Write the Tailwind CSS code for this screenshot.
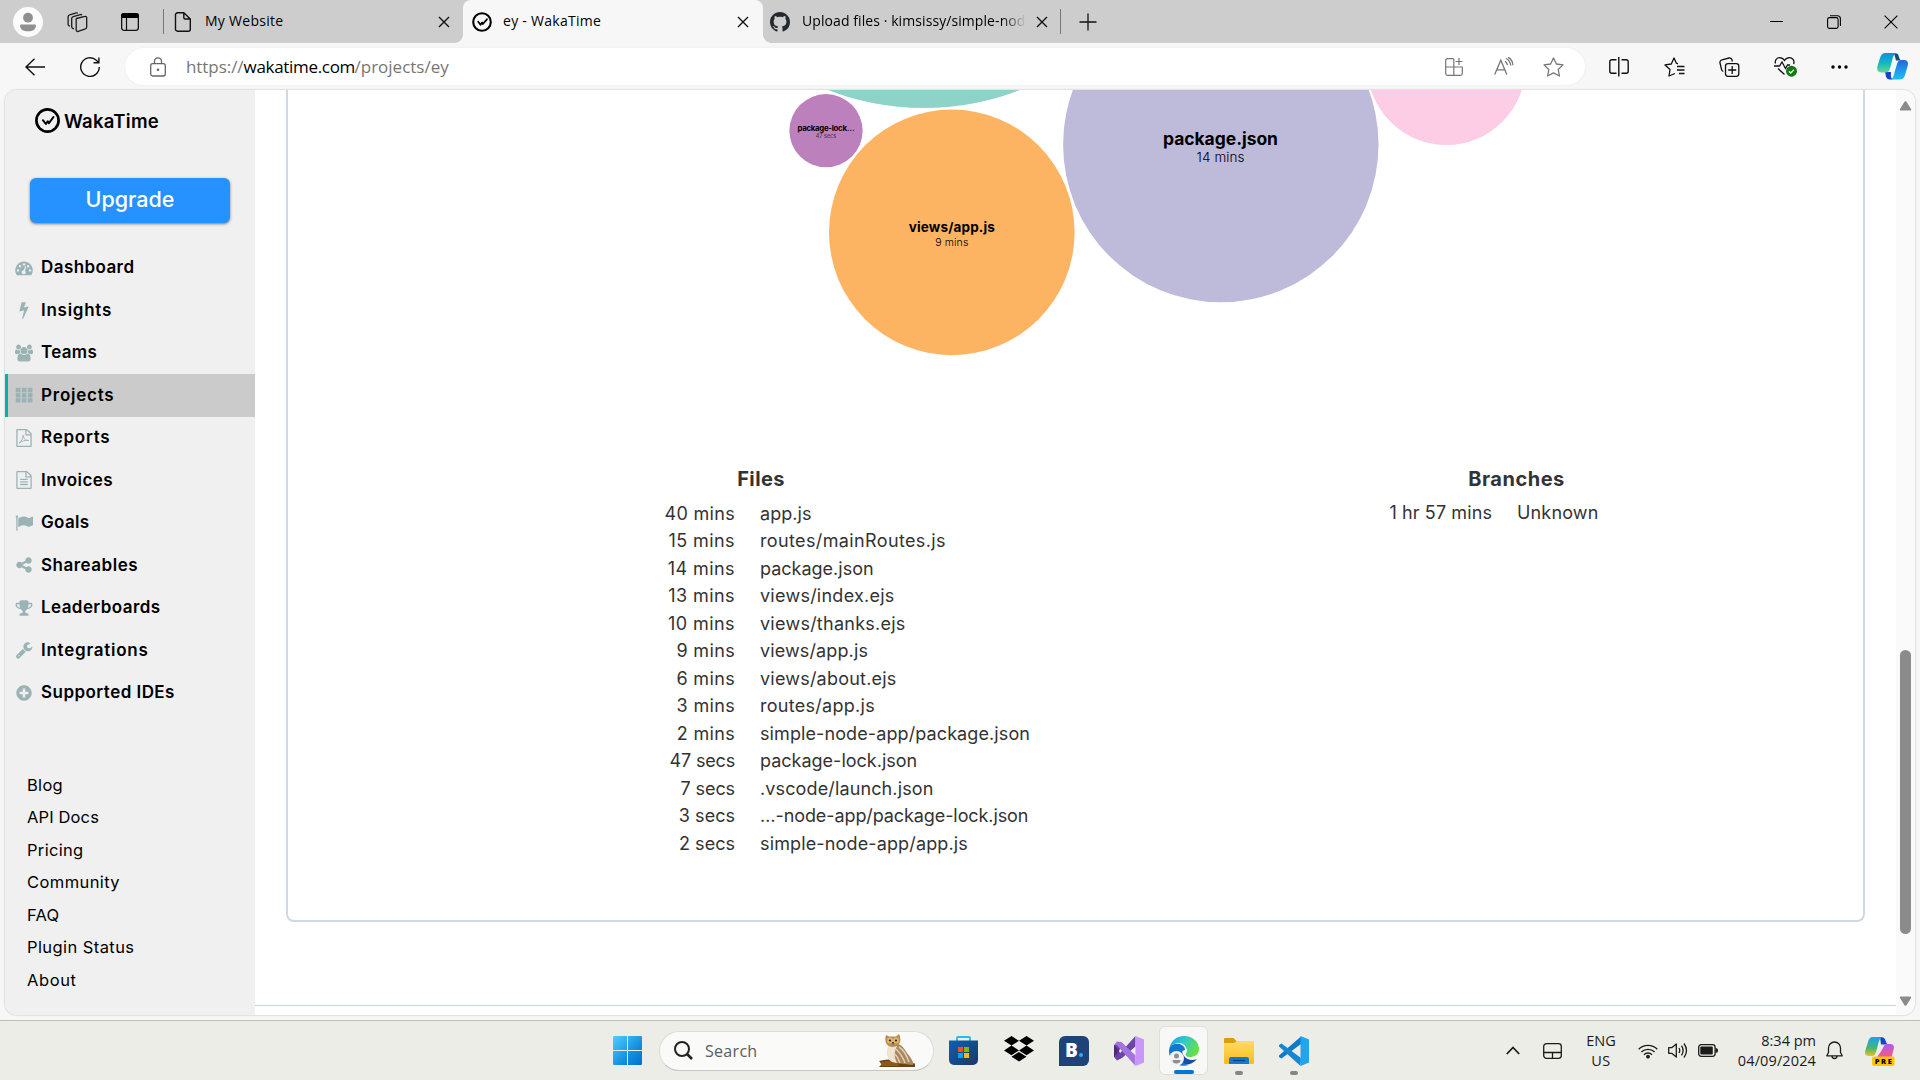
<!DOCTYPE html>
<html lang="en">
<head>
<meta charset="utf-8">
<title>ey - WakaTime</title>
<script src="https://cdn.jsdelivr.net/npm/@tailwindcss/browser@4"></script>
</head>
<body class="w-[1920px] h-[1080px] overflow-hidden bg-[#f7f7f7] font-['Inter','Roboto',sans-serif] text-black flex flex-col">

<!-- Tab strip -->
<header class="h-[43px] shrink-0 flex items-center bg-[#cdcdcd] font-['Open_Sans','Noto_Sans',sans-serif] text-[14px] whitespace-nowrap">
  <div class="w-14 flex justify-center"><svg width="30" height="30" viewBox="0 0 30 30"><circle cx="15" cy="15" r="15" fill="#fbfbfb"/><circle cx="15" cy="10.700" r="4.900" fill="#8f8f8f"/><path d="M8 17.500h14a.9.9 0 0 1 .9.900c0 4-3.200 5.900-7.900 5.900s-7.900-1.900-7.900-5.900a.9.9 0 0 1 .9-.9z" fill="#8f8f8f"/></svg></div>
  <div class="w-11 flex justify-center pr-0.5"><svg width="22" height="22" viewBox="0 0 22 22" fill="none" stroke="#1b1b1b" stroke-width="1.300"><path d="M10.500 7.500 18.800 5.400a1.500 1.500 0 0 1 1.900 1.400v9.200a2 2 0 0 1-1.300 1.900l-7.200 2.500a1.500 1.500 0 0 1-2-1.400V9.200a1.800 1.800 0 0 1 .3-1.700z"/><path d="M8 17.800 6.700 17.300A1.600 1.600 0 0 1 5.700 15.800V7.500a2 2 0 0 1 1.500-1.900l7.200-2a1.300 1.300 0 0 1 1.500.6M4 15.300l-1-.6a1.600 1.600 0 0 1-.9-1.500V5.800a2 2 0 0 1 1.500-1.900L10.300 2a1.300 1.300 0 0 1 1.500.4"/></svg></div>
  <div class="w-15 flex justify-center"><svg width="18" height="18" viewBox="0 0 18 18"><rect x=".65" y=".65" width="16.700" height="16.700" rx="2.500" fill="none" stroke="#111" stroke-width="1.300"/><path d="M0 5V3a3 3 0 0 1 3-3h12a3 3 0 0 1 3 3v2z"/><path d="M5.500 5v12.500" stroke="#111" stroke-width="1.200"/></svg></div>
  <div class="w-px h-[25px] bg-[#777] ml-[3px]"></div>
  <div class="w-[299px] h-full flex items-center pl-[10px]">
    <svg width="18" height="20" viewBox="0 0 18 20" fill="none" stroke="#111" stroke-width="1.400" stroke-linejoin="round"><path d="M3.500.8h6.300L16.300 7v10.200a2 2 0 0 1-2 2H3.500a2 2 0 0 1-2-2V2.800a2 2 0 0 1 2-2zM9.800.8v4.700a1.500 1.500 0 0 0 1.500 1.500h5"/></svg>
    <span class="ml-[13px] w-[220px] -mt-[3px] tracking-[0.280px]">My Website</span>
    <svg class="ml-[13px]" width="12" height="12" viewBox="0 0 12 12" stroke="#111" stroke-width="1.400"><path d="M1 1l10 10M11 1 1 11"/></svg>
  </div>
  <div class="relative w-[300px] h-full flex items-center pl-[9px] bg-[#f7f7f7] rounded-t-lg">
    <div class="absolute -left-2 bottom-0 size-2 bg-[radial-gradient(circle_at_0_0,transparent_7.500px,#f7f7f7_8px)]"></div>
    <div class="absolute -right-2 bottom-0 size-2 bg-[radial-gradient(circle_at_100%_0,transparent_7.500px,#f7f7f7_8px)]"></div>
    <svg width="20" height="20" viewBox="0 0 20 20" fill="none" stroke="#000"><circle cx="10" cy="10" r="8.800" stroke-width="2.100"/><path d="m6.200 9.700 2.300 3 1.600-2.200.8 1.500 4-4.700" stroke-width="1.800" stroke-linecap="round" stroke-linejoin="round"/></svg>
    <span class="ml-[11px] w-[225px] -mt-[3px] tracking-[0.280px]">ey - WakaTime</span>
    <svg class="ml-[9px]" width="12" height="12" viewBox="0 0 12 12" stroke="#111" stroke-width="1.400"><path d="M1 1l10 10M11 1 1 11"/></svg>
  </div>
  <div class="w-[297px] h-full flex items-center pl-[7px]">
    <svg width="20" height="20" viewBox="0 0 16 16" fill="#24292f"><path d="M8 0C3.580 0 0 3.580 0 8c0 3.540 2.290 6.530 5.470 7.590.4.070.55-.17.55-.38 0-.19-.01-.82-.01-1.490-2.010.37-2.530-.49-2.690-.94-.09-.23-.48-.94-.82-1.130-.28-.15-.68-.52-.01-.53.63-.01 1.080.58 1.230.82.72 1.210 1.870.87 2.330.66.070-.52.28-.87.51-1.070-1.780-.2-3.640-.89-3.640-3.950 0-.87.31-1.590.82-2.150-.08-.2-.36-1.020.08-2.120 0 0 .67-.21 2.200.82.64-.18 1.320-.27 2-.27s1.360.09 2 .27c1.530-1.040 2.200-.82 2.200-.82.44 1.100.16 1.920.08 2.120.51.56.82 1.270.82 2.150 0 3.070-1.870 3.750-3.650 3.950.29.25.54.73.54 1.480 0 1.070-.01 1.930-.01 2.200 0 .21.15.46.55.38A8.010 8.010 0 0 0 16 8c0-4.420-3.580-8-8-8z"/></svg>
    <span class="ml-3 w-[224px] -mt-[3px] tracking-[0.080px] overflow-hidden [mask-image:linear-gradient(to_right,#000_200px,transparent)]">Upload files · kimsissy/simple-nod</span>
    <svg class="ml-2.5" width="12" height="12" viewBox="0 0 12 12" stroke="#111" stroke-width="1.400"><path d="M1 1l10 10M11 1 1 11"/></svg>
  </div>
  <div class="w-px h-[25px] bg-[#777]"></div>
  <svg class="ml-[18px]" width="18" height="18" viewBox="0 0 18 18" stroke="#111" stroke-width="1.300"><path d="M9 .5v17M.5 9h17"/></svg>
  <div class="ml-auto flex items-center">
    <div class="w-[57px] flex justify-center"><div class="w-[13px] h-px bg-black"></div></div>
    <div class="w-[57px] flex justify-center"><svg width="14" height="14" viewBox="0 0 14 14" fill="none" stroke="#000" stroke-width="1.100"><rect x=".6" y="2.600" width="10.500" height="10.800" rx="1.800"/><path d="M3 .7h7.400a3 3 0 0 1 3 3V11"/></svg></div>
    <div class="w-[58px] flex justify-center"><svg width="14" height="14" viewBox="0 0 14 14" stroke="#000" stroke-width="1.100"><path d="M.6.6l12.800 12.800M13.400.6.6 13.400"/></svg></div>
  </div>
</header>

<!-- Toolbar -->
<div class="h-[47px] shrink-0 flex items-center">
  <svg class="ml-[25px]" width="20" height="18" viewBox="0 0 20 18" fill="none" stroke="#111" stroke-width="1.400"><path d="M20 9H1M9.500.7 1 9l8.500 8.300"/></svg>
  <svg class="ml-[35px]" width="20" height="20" viewBox="0 0 20 20" fill="none" stroke="#111" stroke-width="1.400"><path d="M19.300 10A9.300 9.300 0 1 1 16.300 3.200L18.800 5.500M18.900.4v5.300h-5.400"/></svg>
  <div class="ml-[25px] w-[1460px] h-[37px] rounded-full bg-white shadow-[0_0_3px_rgba(0,0,0,0.06)] flex items-center">
    <svg class="ml-[25px]" width="16" height="20" viewBox="0 0 16 20" fill="none" stroke="#666" stroke-width="1.300"><rect x=".7" y="6.700" width="14.600" height="12.300" rx="2"/><path d="M4.500 6.700V4.300a3.500 3.500 0 0 1 7 0v2.400"/><circle cx="8" cy="12.800" r="1.300" fill="#666" stroke="none"/></svg>
    <div class="ml-5 flex font-['Open_Sans','Noto_Sans',sans-serif] text-[17px] text-[#767676] whitespace-nowrap"><span class="tracking-[-0.060px]">https://</span><span class="w-[111px] text-black tracking-[-0.310px]">wakatime.com</span><span>/projects/ey</span></div>
    <svg class="ml-auto" width="18" height="18" viewBox="0 0 18 18" fill="none" stroke="#767676" stroke-width="1.200"><path d="M8.500.7H2.500A1.800 1.800 0 0 0 .7 2.500V15.500a1.800 1.800 0 0 0 1.800 1.800h13a1.800 1.800 0 0 0 1.800-1.800V9H.7M8.800.7v16.600M14 0v7M10.500 3.500h7"/></svg>
    <svg class="ml-[31px]" width="20" height="19" viewBox="0 0 20 19" fill="none" stroke="#767676" stroke-width="1.300"><path d="M.7 17.500 6.800 3.200l6 14.300M2.700 12.800h8.200M11 4.200q2 1.200 2.500 4M12 1.500q4 1.800 4.800 7M14 .3q4.500 2 5 8"/></svg>
    <svg class="ml-[29px] mr-[21px]" width="21" height="20" viewBox="0 0 21 20" fill="none" stroke="#767676" stroke-width="1.300" stroke-linejoin="round"><path d="m10.500 1 2.900 6 6.600.9-4.800 4.600 1.200 6.500-5.900-3.100L4.600 19l1.200-6.500L1 7.900 7.600 7z"/></svg>
  </div>
  <div class="ml-[24px] flex items-center">
    <svg width="20" height="20" viewBox="0 0 20 20" fill="none" stroke="#111" stroke-width="1.400"><path d="M7.500 2.700H2.800A2 2 0 0 0 .8 4.700v9.600a2 2 0 0 0 2 2h4.700M12.500 2.700h4.700a2 2 0 0 1 2 2v9.600a2 2 0 0 1-2 2h-4.700M9.800 0v19.500"/></svg>
    <svg class="ml-[35px]" width="21" height="20" viewBox="0 0 21 20" fill="none" stroke="#111" stroke-width="1.300" stroke-linejoin="round"><path d="M11 16.500 5 19l1-6.500L1 7.900 7.300 7 10 1l2.400 5.200 1.600.6M13 9.500h7.500M13 13h7.500M15 16.500h5.500"/></svg>
    <svg class="ml-8.5" width="21" height="20" viewBox="0 0 21 20" fill="none" stroke="#111" stroke-width="1.300"><rect x="6.500" y="6.700" width="13.300" height="12.600" rx="2.500"/><path d="M4.300 14.500A3 3 0 0 1 2.500 12.400L1 6A2.500 2.500 0 0 1 3 2.900L10 1a2.500 2.500 0 0 1 3 2l.4 1.500M13.200 9v8M9.200 13h8"/></svg>
    <svg class="ml-[34px]" width="23" height="21" viewBox="0 0 23 21" fill="none" stroke="#111" stroke-width="1.300"><path d="M1.500 7.500C.5 4 3 1.700 5.500 1.700 8 1.700 9.500 3 10.500 4.500 11.500 3 13 1.700 15.500 1.700 18.500 1.700 21 4.500 19.600 8M0 10h5.500L8 6l3.500 6.500 2-3.500H16M4 12.500l6.500 6"/><circle cx="17.500" cy="15.200" r="5.500" fill="#0f7b0f" stroke="none"/><path d="m15 15.300 1.700 1.700 3.300-3.300" stroke="#fff"/></svg>
    <svg class="ml-[34px]" width="17" height="4" viewBox="0 0 17 4"><circle cx="2" cy="2" r="1.700"/><circle cx="8.500" cy="2" r="1.700"/><circle cx="15" cy="2" r="1.700"/></svg>
    <svg class="ml-[29px]" width="31" height="27" viewBox="0 0 31 27"><defs><linearGradient id="cpa" x1="0" y1="0" x2="0" y2="1"><stop offset="0" stop-color="#0f8fe0"/><stop offset=".5" stop-color="#11b5c4"/><stop offset="1" stop-color="#5fd98a"/></linearGradient><linearGradient id="cpb" x1="0" y1="0" x2="0" y2="1"><stop offset="0" stop-color="#2467d8"/><stop offset="1" stop-color="#1cc0fa"/></linearGradient></defs><path d="M17 0c5 0 4.500 3 5.500 5.500S25 7.500 26 7.500h-7z" fill="#0c4f80"/><path d="M8 19h6c0 3-1 7 3 7.500h-4C8.500 26.500 9 22 8 19z" fill="#1740cc"/><path d="M8.500 0H20c-3 0-4 4-5 8l-2 7.500c-.8 2.500-2 4-4.500 4H4.500c-4 0-5-3-4-6.500L3 5C4 1.800 5.500 0 8.500 0z" fill="url(#cpa)"/><path d="M22.500 26.500H13c2.500 0 3.500-3 4.500-7L20 11c.8-2.700 2-4 4.500-4h2.500c4 0 4.500 3 3.500 6.500L28 22c-1 3-2.500 4.500-5.500 4.500z" fill="url(#cpb)"/></svg>
  </div>
</div>

<!-- Page viewport -->
<main class="ml-[5px] w-[1910px] h-[925px] shrink-0 flex bg-white rounded-xl overflow-hidden shadow-[0_0_2px_rgba(0,0,0,0.3)]">
  <aside class="w-[250px] bg-[#f0f0f0] flex flex-col shrink-0">
    <div class="pl-[30px] pt-[18px] flex items-center h-[43px]">
      <svg width="25" height="25" viewBox="0 0 25 25" fill="none" stroke="#000"><circle cx="12.500" cy="12.500" r="11.100" stroke-width="2.700"/><path d="m7.900 12.200 3 3.800 1.800-2.700 1.200 1.900 4.600-6.200" stroke-width="2" stroke-linecap="round" stroke-linejoin="round"/></svg>
      <span class="ml-1 mt-px text-[18.500px] font-semibold leading-none tracking-[0.250px]">WakaTime</span>
    </div>
    <div class="mx-[25px] mt-[45px] h-[45px] rounded-md bg-[#2692ff] shadow-[0_1px_3px_rgba(0,0,0,0.5)] flex items-center justify-center text-white text-[21.500px] font-medium pb-0.5">Upgrade</div>
    <nav class="mt-[23.500px] text-[17px] font-semibold leading-none [&>div]:h-[42.500px] [&>div]:flex [&>div]:items-center [&_svg]:w-[18px] [&_svg]:h-[18px] [&_svg]:fill-[#9ab3b5] [&_svg]:mr-2 [&>div]:pl-2.5">
      <div><svg viewBox="0 0 18 18"><path fill-rule="evenodd" d="M9 2.500a8.800 8.800 0 0 1 7.400 13.400c-.2.400-.4.400-.8.400H2.400c-.4 0-.6 0-.8-.4A8.800 8.800 0 0 1 9 2.500zM3 10.200a1.200 1.200 0 1 0 .1 0zM5 6a1.200 1.200 0 1 0 .1 0zM9 4.200a1.200 1.200 0 1 0 .1 0zM13 6a1.200 1.200 0 1 0 .1 0zM15 10.200a1.200 1.200 0 1 0 .1 0zM10.300 7.200 8.600 11.300a2 2 0 1 0 1.300.4L11.300 7.500z"/></svg><span class="tracking-[0.420px]">Dashboard</span></div>
      <div><svg viewBox="0 0 1792 1792"><path d="M1333 566q18 20 7 44l-540 1157q-13 25-42 25-4 0-14-2-17-5-25.500-19t-4.500-30l197-808-406 101q-4 1-12 1-18 0-31-11-18-15-13-39l201-825q4-14 16-23t28-9h328q19 0 32 12.500t13 29.500q0 8-5 18l-171 463 396-98q8-2 12-2 19 0 34 15z"/></svg><span class="tracking-[0.730px]">Insights</span></div>
      <div><svg viewBox="-64 0 1920 1792"><path d="M529 896q-162 5-265 128h-134q-82 0-138-40.500t-56-118.500q0-353 124-353 6 0 43.500 21t97.500 42.500 119 21.500q67 0 133-23-5 37-5 66 0 139 81 256zm1071 637q0 120-73 189.500t-194 69.500h-874q-121 0-194-69.500t-73-189.500q0-53 3.500-103.500t14-109 26.500-108.500 43-97.500 62-81 85.500-53.500 111.500-20q10 0 43 21.500t73 48 107 48 135 21.500 135-21.500 107-48 73-48 43-21.500q61 0 111.500 20t85.500 53.500 62 81 43 97.500 26.500 108.500 14 109 3.500 103.500zm-1024-1277q0 106-75 181t-181 75-181-75-75-181 75-181 181-75 181 75 75 181zm704 384q0 159-112.500 271.500t-271.500 112.500-271.500-112.500-112.500-271.500 112.500-271.500 271.500-112.500 271.500 112.500 112.500 271.500zm576 225q0 78-56 118.500t-138 40.500h-134q-103-123-265-128 81-117 81-256 0-29-5-66 66 23 133 23 59 0 119-21.500t97.500-42.500 43.500-21q124 0 124 353zm-128-609q0 106-75 181t-181 75-181-75-75-181 75-181 181-75 181 75 75 181z"/></svg><span class="tracking-[0.300px]">Teams</span></div>
      <div class="bg-[#cbcbcb] shadow-[inset_3px_0_0_#00b1ae]"><svg viewBox="0 0 18 18"><path d="M1 2h4.200v4H1zM7 2h4.200v4H7zM13 2h4.200v4H13zM1 7.200h4.200v4H1zM7 7.200h4.200v4H7zM13 7.200h4.200v4H13zM1 12.400h4.200v3.800H1zM7 12.400h4.200v3.800H7zM13 12.400h4.200v3.800H13z" stroke="#9ab3b5" stroke-width=".5" stroke-linejoin="round"/></svg><span class="tracking-[0.770px]">Projects</span></div>
      <div><svg viewBox="0 0 1792 1792"><path d="M1596 380q28 28 48 76t20 88v1152q0 40-28 68t-68 28h-1344q-40 0-68-28t-28-68v-1600q0-40 28-68t68-28h896q40 0 88 20t76 48zm-444-244v376h376q-10-29-22-41l-313-313q-12-12-41-22zm384 1528v-1024h-416q-40 0-68-28t-28-68v-416h-768v1536h1280z"/><path d="M800 620c90 330 170 520 560 530-330-60-640 20-960 260 230-180 400-460 400-790z" fill="none" stroke="#9ab3b5" stroke-width="95" stroke-linejoin="round"/></svg><span class="tracking-[0.760px]">Reports</span></div>
      <div><svg viewBox="0 0 1792 1792"><path d="M1596 380q28 28 48 76t20 88v1152q0 40-28 68t-68 28h-1344q-40 0-68-28t-28-68v-1600q0-40 28-68t68-28h896q40 0 88 20t76 48zm-444-244v376h376q-10-29-22-41l-313-313q-12-12-41-22zm384 1528v-1024h-416q-40 0-68-28t-28-68v-416h-768v1536h1280zm-1024-864q0-14 9-23t23-9h704q14 0 23 9t9 23v64q0 14-9 23t-23 9h-704q-14 0-23-9t-9-23v-64zm736 224q14 0 23 9t9 23v64q0 14-9 23t-23 9h-704q-14 0-23-9t-9-23v-64q0-14 9-23t23-9h704zm0 256q14 0 23 9t9 23v64q0 14-9 23t-23 9h-704q-14 0-23-9t-9-23v-64q0-14 9-23t23-9h704z"/></svg><span class="tracking-[0.430px]">Invoices</span></div>
      <div><svg viewBox="0 0 1792 1792"><path d="M320 256q0 72-64 110v1266q0 13-9.500 22.500t-22.500 9.500h-64q-13 0-22.500-9.500t-9.500-22.500v-1266q-64-38-64-110 0-53 37.500-90.500t90.500-37.500 90.500 37.500 37.500 90.500zm1472 64v763q0 25-12.500 38.500t-39.500 27.500q-215 116-369 116-61 0-123.500-22t-108.500-48-115.500-48-142.500-22q-192 0-464 146-17 9-33 9-26 0-45-19t-19-45v-742q0-32 31-55 21-14 79-43 236-120 421-120 107 0 200 29t219 88q38 19 88 19 54 0 117.500-21t110-47 88-47 54.500-21q26 0 45 19t19 45z"/></svg><span class="tracking-[0.340px]">Goals</span></div>
      <div><svg viewBox="0 0 1792 1792"><path d="M1344 1024q133 0 226.500 93.500t93.500 226.500-93.500 226.500-226.500 93.500-226.500-93.500-93.500-226.500q0-12 2-34l-360-180q-92 86-218 86-133 0-226.500-93.500t-93.500-226.500 93.500-226.500 226.500-93.500q126 0 218 86l360-180q-2-22-2-34 0-133 93.500-226.500t226.500-93.500 226.500 93.500 93.500 226.500-93.500 226.500-226.500 93.500q-126 0-218-86l-360 180q2 22 2 34t-2 34l360 180q92-86 218-86z"/></svg><span class="tracking-[0.500px]">Shareables</span></div>
      <div><svg viewBox="0 0 1792 1792"><path d="M522 883q-74-162-74-371h-256v96q0 78 94.500 162t235.500 113zm1078-275v-96h-256q0 209-74 371 141-29 235.500-113t94.500-162zm128-128v128q0 71-41.500 143t-112 130-173 97.500-215.500 44.500q-42 54-95 95-38 34-52.500 72.500t-14.500 89.500q0 54 30.500 91t97.500 37q75 0 133.500 45.500t58.500 114.500v64q0 14-9 23t-23 9h-832q-14 0-23-9t-9-23v-64q0-69 58.500-114.500t133.500-45.500q67 0 97.500-37t30.500-91q0-51-14.500-89.500t-52.500-72.500q-53-41-95-95-113-5-215.500-44.500t-173-97.500-112-130-41.500-143v-128q0-40 28-68t68-28h288v-96q0-66 47-113t113-47h576q66 0 113 47t47 113v96h288q40 0 68 28t28 68z"/></svg><span class="tracking-[0.420px]">Leaderboards</span></div>
      <div><svg viewBox="0 0 1792 1792"><path d="M448 1472q0-26-19-45t-45-19-45 19-19 45 19 45 45 19 45-19 19-45zm644-420l-682 682q-37 37-90 37-52 0-91-37l-106-108q-38-36-38-90 0-53 38-91l681-681q39 98 114.500 173.500t173.500 114.500zm634-435q0 39-23 106-47 134-164.500 217.500t-258.500 83.500q-185 0-316.500-131.500t-131.500-316.500 131.500-316.500 316.500-131.500q58 0 121.500 16.500t107.500 46.500q16 11 16 28t-16 28l-293 169v224l193 107q5-3 79-48.500t135.500-81 70.500-35.500q15 0 23.500 10t8.500 25z"/></svg><span class="tracking-[0.750px]">Integrations</span></div>
      <div><svg viewBox="0 0 1792 1792"><path d="M1344 960v-128q0-26-19-45t-45-19h-256v-256q0-26-19-45t-45-19h-128q-26 0-45 19t-19 45v256h-256q-26 0-45 19t-19 45v128q0 26 19 45t45 19h256v256q0 26 19 45t45 19h128q26 0 45-19t19-45v-256h256q26 0 45-19t19-45zm320-64q0 209-103 385.500t-279.500 279.500-385.500 103-385.500-103-279.500-279.500-103-385.500 103-385.500 279.500-279.500 385.500-103 385.500 103 279.500 279.500 103 385.500z"/></svg><span class="tracking-[0.460px]">Supported IDEs</span></div>
    </nav>
    <div class="mt-[54.500px] pl-[22px] text-[16.500px] leading-[32.500px] flex flex-col items-start">
      <span class="tracking-[0.300px]">Blog</span><span class="tracking-[0.130px]">API Docs</span><span class="tracking-[0.320px]">Pricing</span><span class="tracking-[0.410px]">Community</span><span class="tracking-[0.270px]">FAQ</span><span class="tracking-[0.420px]">Plugin Status</span><span class="tracking-[0.600px]">About</span>
    </div>
  </aside>

  <div class="w-[1641px] shrink-0 flex flex-col">
    <section class="ml-[31px] w-[1579px] h-[832px] border-2 border-t-0 border-[#cfd9e3] rounded-b-lg">
      <svg class="block" width="1575" height="360" viewBox="288 90 1575 360" text-anchor="middle">
        <circle cx="924" cy="-156" r="264" fill="#8dd3c7"/>
        <circle cx="826" cy="130.700" r="36.600" fill="#bc80bd"/>
        <circle cx="951.800" cy="232.400" r="122.800" fill="#fdb462"/>
        <circle cx="1220.800" cy="144.600" r="157.700" fill="#bebada"/>
        <circle cx="1446.400" cy="65.800" r="79.200" fill="#fccde5"/>
        <g font-weight="700"><text x="826" y="131" font-size="7.800" textLength="57">package-lock…</text><text x="951.800" y="232" font-size="13.500" textLength="86">views/app.js</text><text x="1220.500" y="145" font-size="17.500" textLength="115">package.json</text></g>
        <g font-weight="300"><text x="826" y="138" font-size="5.600" textLength="20.500">47 secs</text><text x="951.800" y="246" font-size="10.500" textLength="33">9 mins</text><text x="1220.500" y="162" font-size="13.500" textLength="48">14 mins</text></g>
      </svg>
      <div class="flex text-[18px] text-[#333] leading-[27.500px] whitespace-nowrap pt-3">
        <div class="w-[946px]">
          <h2 class="text-center text-xl font-bold leading-[34px] tracking-[0.360px]">Files</h2>
          <div class="grid grid-cols-[447px_1fr] gap-x-[25px] pt-[3.500px] [&>*:nth-child(odd)]:text-right">
            <div class="tracking-[0.320px]">40 mins</div><div class="tracking-[0.050px]">app.js</div>
            <div class="tracking-[0.420px]">15 mins</div><div class="tracking-[0.370px]">routes/mainRoutes.js</div>
            <div class="tracking-[0.420px]">14 mins</div><div>package.json</div>
            <div class="tracking-[0.420px]">13 mins</div><div class="tracking-[0.250px]">views/index.ejs</div>
            <div class="tracking-[0.420px]">10 mins</div><div class="tracking-[0.250px]">views/thanks.ejs</div>
            <div class="tracking-[0.340px]">9 mins</div><div class="tracking-[0.120px]">views/app.js</div>
            <div class="tracking-[0.340px]">6 mins</div><div class="tracking-[0.210px]">views/about.ejs</div>
            <div class="tracking-[0.340px]">3 mins</div><div class="tracking-[0.280px]">routes/app.js</div>
            <div class="tracking-[0.340px]">2 mins</div><div class="tracking-[0.100px]">simple-node-app/package.json</div>
            <div class="tracking-[-0.170px]">47 secs</div><div>package-lock.json</div>
            <div class="tracking-[-0.090px]">7 secs</div><div class="tracking-[0.130px]">.vscode/launch.json</div>
            <div class="tracking-[0.030px]">3 secs</div><div class="tracking-[-0.090px]">…-node-app/package-lock.json</div>
            <div class="tracking-[0.030px]">2 secs</div><div class="tracking-[0.140px]">simple-node-app/app.js</div>
          </div>
        </div>
        <div class="w-[565px]">
          <h2 class="text-center text-xl font-bold leading-[34px] tracking-[0.500px]">Branches</h2>
          <div class="grid grid-cols-[258px_1fr] gap-x-[25px] pt-[2.500px]">
            <div class="text-right tracking-[0.100px]">1 hr 57 mins</div><div class="tracking-[0.160px]">Unknown</div>
          </div>
        </div>
      </div>
    </section>
    <div class="mt-[83px] h-px bg-[#c8d3de]"></div>
  </div>

  <div class="w-[19px] bg-[#fafafa] flex flex-col items-center">
    <svg class="mt-[11px]" width="13" height="10" viewBox="0 0 13 10"><path d="M5.300 1a1.400 1.400 0 0 1 2.400 0L12 8a1 1 0 0 1-.9 1.600H1.900A1 1 0 0 1 1 8z" fill="#8b8b8b"/></svg>
    <div class="mt-[539px] w-[11px] h-[284px] rounded-full bg-[#8b8b8b]"></div>
    <svg class="mt-[62px]" width="13" height="10" viewBox="0 0 13 10"><path d="M5.300 9a1.400 1.400 0 0 0 2.400 0L12 2A1 1 0 0 0 11.100.4H1.900A1 1 0 0 0 1 2z" fill="#8b8b8b"/></svg>
  </div>
</main>

<!-- Taskbar -->
<footer class="mt-[5px] h-[60px] shrink-0 border-t border-[#bbbdba] bg-[#edede8] flex items-center font-['Open_Sans','Noto_Sans',sans-serif]">
  <svg class="ml-[613px]" width="29" height="29" viewBox="0 0 29 29"><defs><linearGradient id="win" x1="0" y1="0" x2="1" y2="1"><stop offset="0" stop-color="#4fcfff"/><stop offset=".6" stop-color="#1490df"/><stop offset="1" stop-color="#0070d0"/></linearGradient></defs><path d="M1 0h13v14H0V1a1 1 0 0 1 1-1zM15 0h13a1 1 0 0 1 1 1v13H15zM0 15h14v14H1a1 1 0 0 1-1-1zM15 15h14v13a1 1 0 0 1-1 1H15z" fill="url(#win)"/></svg>
  <div class="ml-[17px] w-[275px] h-[40px] rounded-full bg-[#fafaf8] border border-[#dcdcd8] border-b-[#c6c6c2] flex items-center">
    <svg class="ml-[14px]" width="19" height="19" viewBox="0 0 19 19" fill="none" stroke="#222"><circle cx="8" cy="8" r="7" stroke-width="2"/><path d="m13 13 5 5" stroke-width="2.600"/></svg>
    <span class="ml-3 text-[16px] text-[#5c5c5c] tracking-[0.300px]">Search</span>
    <svg class="ml-auto mr-[17px]" width="37" height="33" viewBox="0 0 37 33"><path d="M0 27q10-3 18 0l18 2.500v3.500H0l3-3z" fill="#6b4312"/><path d="M1 28l16-2 3 6H3z" fill="#8a5a1c"/><path d="M10 12C7 19 8 26 17 29l17 2c1-3-2-7-6-12-3-5-5-8-9-9z" fill="#a98662"/><path d="M9 12c-2 7-1 13 4 16l5 1c-3-6-3-11 0-17z" fill="#efe4cf"/><path d="M20 13c5 3 8 9 10 15M17 15c4 4 7 8 9 14M16 20c3 3 4 6 5 9" stroke="#e2cfae" stroke-width="1.500" fill="none"/><path d="M7 1l3 1.500h7L20 0c2 4 2 9-1 11-3 2.500-8 2.500-10.500 0S6 4 7 1z" fill="#b88c55"/><circle cx="11" cy="6.500" r="3" fill="#d7b787"/><circle cx="17" cy="6.500" r="3" fill="#d7b787"/><circle cx="11" cy="6.500" r="1.700" fill="#ffb900"/><circle cx="17" cy="6.500" r="1.700" fill="#ffb900"/><circle cx="11" cy="6.500" r=".9"/><circle cx="17" cy="6.500" r=".9"/><path d="m13 8 1 3 1-3z" fill="#443018"/></svg>
  </div>
  <svg class="ml-[15px]" width="29" height="29" viewBox="0 0 29 29"><defs><linearGradient id="st" x1="0" y1="0" x2="1" y2="1"><stop offset="0" stop-color="#0a62b5"/><stop offset="1" stop-color="#1f3562"/></linearGradient></defs><path d="M8 5.500V2a1 1 0 0 1 1-1h11a1 1 0 0 1 1 1v3.500" fill="none" stroke="#22bdf2" stroke-width="1.900"/><path d="M0 4.500h29V24a5 5 0 0 1-5 5H5a5 5 0 0 1-5-5z" fill="url(#st)"/><path d="M9 11h5v5H9z" fill="#f25022"/><path d="M15 11h5v5h-5z" fill="#7fba00"/><path d="M9 17h5v5H9z" fill="#00a4ef"/><path d="M15 17h5v5h-5z" fill="#ffb900"/></svg>
  <svg class="ml-[26px] -mt-1" width="30" height="26" viewBox="0 0 30 26"><path d="M7.500 0 15 4.800 7.500 9.600 0 4.800zM22.500 0 30 4.800l-7.500 4.800L15 4.800zM7.500 9.600l7.500 4.800-7.500 4.800L0 14.400zM22.500 9.600l7.500 4.800-7.500 4.800-7.500-4.800zM7.500 20.700 15 15.900l7.500 4.800L15 25.500z"/></svg>
  <div class="ml-[25px] size-[30px] rounded-md rounded-bl-none bg-[#1f4379] flex items-center justify-center gap-px text-[19px] font-extrabold leading-[28px] text-white pb-px"><span>B</span><i class="mt-2.5 size-1 rounded-full bg-[#1fb5f3]"></i></div>
  <svg class="ml-[25px]" width="30" height="30" viewBox="0 0 30 30"><path d="M0 9 3 7.500 7 11 5 15l2 4-4 3.500L0 21z" fill="#6b3fa0"/><path d="M0 9l5 6-5 6z" fill="#4d2b78"/><path d="M21.500 0v10.500L8 22l-5 2.500-3-3.500c1 .5 2 .3 3-.5z" fill="#6e44a8"/><path d="M0 9l3-3.500L7.500 6l14 13.500V30L3 9.500C2 8.500 1 8.500 0 9z" fill="#a473dd"/><path d="m21.500 0 8.500 3.500v23L21.500 30z" fill="#c996fa"/></svg>
  <div class="relative ml-[15px] w-[49px] h-[49px] rounded-md bg-[#f8f8f6] border border-[#dededa] flex items-center justify-center">
    <svg width="30" height="30" viewBox="0 0 30 30"><defs><linearGradient id="ed" x1="0" y1="0" x2="1" y2=".4"><stop offset="0" stop-color="#1a9de0"/><stop offset=".5" stop-color="#30c6d0"/><stop offset="1" stop-color="#62e04c"/></linearGradient></defs><path d="M13 13C8 14 7 21 10 25c4 5 12 5 18-2-5 2-10 1-13-3-2-2-2-5-2-7z" fill="#1252a0"/><path d="M0 15C0 8 8 6 13 9c2 1.500 3 3 3 5-4 1-6 5-4 9 2 4 5 6 8 6C8 32 0 25 0 15z" fill="#1277d2"/><path d="M0 14C1 6 7 0 15 0c9 0 15 6 15 13 0 6-5 8-9 8-4 0-5-2-4-3.500C20 13 15 6 9 7 4 7.500 1 10 0 14z" fill="url(#ed)"/><circle cx="7.500" cy="22.500" r="7.500" fill="#f3f3f3"/><circle cx="7.500" cy="20" r="2.500" fill="#8f8f8f"/><path d="M3.500 24h8c0 2.500-1.500 3.500-4 3.500s-4-1-4-3.500z" fill="#8f8f8f"/></svg>
    <div class="absolute left-[14px] bottom-0 w-5 h-1 rounded-full bg-[#0078d4]"></div>
  </div>
  <div class="relative ml-4"><svg width="30" height="30" viewBox="0 0 30 30"><defs><linearGradient id="fo" x1="0" y1="0" x2="0" y2="1"><stop offset="0" stop-color="#ffdb66"/><stop offset="1" stop-color="#fcbc1b"/></linearGradient></defs><path d="M1 2h8.500l3 3H29a1 1 0 0 1 1 1v5H0V3a1 1 0 0 1 1-1z" fill="#dc9d0a"/><path d="M0 7h10l3-2h17v22a1 1 0 0 1-1 1H1a1 1 0 0 1-1-1z" fill="url(#fo)"/><path d="M5 28v-5a2 2 0 0 1 2-2h16a2 2 0 0 1 2 2v5z" fill="#1478cf"/><path d="M9 24.500h12" stroke="#0a3f78" stroke-width="1.200"/></svg><div class="absolute left-[11px] -bottom-[9px] w-2 h-1 rounded-full bg-[#858585]"></div></div>
  <div class="relative ml-[25px]"><svg width="30" height="30" viewBox="0 0 30 30"><path d="M0 19.500 22 .5V8L2.500 22.500 0 21z" fill="#0f7ac6"/><path d="M2.500 7.500 22 22l-.5 8L0 10.500V9z" fill="#1687d0"/><path d="m21.500 0 7.500 3a1 1 0 0 1 1 1v22a1 1 0 0 1-1 1l-7.500 3z" fill="#24a3f1"/></svg><div class="absolute left-[11px] -bottom-[9px] w-2 h-1 rounded-full bg-[#858585]"></div></div>

  <div class="ml-auto flex items-center text-[14.500px] leading-5 text-[#1b1b1b] whitespace-nowrap">
    <svg width="14" height="9" viewBox="0 0 14 9" fill="none" stroke="#1b1b1b" stroke-width="1.800"><path d="m.8 8 6.200-6.500L13.200 8"/></svg>
    <svg class="ml-[23px]" width="19" height="16" viewBox="0 0 19 16" fill="none" stroke="#1b1b1b" stroke-width="1.300"><rect x=".7" y=".7" width="17.600" height="14.600" rx="2.800"/><path d="M.7 9.500h17.600M9.500 9.500v6"/></svg>
    <div class="ml-[24px] w-[30px] text-center"><div>ENG</div><div class="tracking-[0.400px]">US</div></div>
    <svg class="ml-[22px]" width="20" height="16" viewBox="0 0 20 16" fill="none" stroke="#1b1b1b" stroke-width="1.400"><path d="M.7 6.200a13.200 13.200 0 0 1 18.600 0M3.400 9a9.500 9.500 0 0 1 13.200 0M6 11.700a5.700 5.700 0 0 1 8 0"/><circle cx="10" cy="13.700" r="1.900" fill="#1b1b1b" stroke="none"/></svg>
    <svg class="ml-[10px]" width="20" height="17" viewBox="0 0 20 17" fill="none" stroke="#1b1b1b" stroke-width="1.300" stroke-linejoin="round"><path d="M.7 5.700v5.600h3L8.300 15V2L3.700 5.700zM11 6q1.500 2.500 0 5M13.500 3.700q3.200 4.800 0 9.600M16 1.500q5 7 0 14"/></svg>
    <svg class="ml-[10px]" width="20" height="13" viewBox="0 0 20 13"><rect x=".7" y=".7" width="16.400" height="11.600" rx="2.500" fill="none" stroke="#1b1b1b" stroke-width="1.300"/><rect x="2.300" y="2.500" width="12.500" height="8" rx="1" fill="#1b1b1b"/><path d="M17.500 4.300h1q1.500 0 1.500 2.200t-1.500 2.200h-1z" fill="#1b1b1b"/></svg>
    <div class="ml-[19px] w-[79px] text-right"><div>8:34 pm</div><div class="tracking-[0.120px]">04/09/2024</div></div>
    <svg class="ml-[10px]" width="17" height="19" viewBox="0 0 17 19" fill="none" stroke="#1b1b1b" stroke-width="1.300" stroke-linejoin="round"><path d="M2.500 11.500V7a6 6 0 0 1 12 0v4.500l1.700 3.300H.8zM6 15a2.500 2.500 0 0 0 5 0"/></svg>
    <svg class="ml-[22px] mr-[25px] mt-0.5" width="30" height="29" viewBox="0 0 30 29"><defs><linearGradient id="pa" x1="0" y1="0" x2="0" y2="1"><stop offset="0" stop-color="#1aa0f5"/><stop offset=".6" stop-color="#4ab66e"/><stop offset="1" stop-color="#f0c020"/></linearGradient><linearGradient id="pb" x1="0" y1="0" x2="0" y2="1"><stop offset="0" stop-color="#b05af0"/><stop offset="1" stop-color="#f65a80"/></linearGradient></defs><path d="M15 0c5 0 5 2.500 6 5s2 2.500 3 2.500h-8z" fill="#1a44c8"/><path d="M8 0h10c-3 0-4 4-5 8l-2 7c-1 3-2 4-4 4H4c-4 0-4.500-3-3.500-6L3 5C4 1.500 5 0 8 0z" fill="url(#pa)"/><path d="M21 20h-9l3-4 3-5c.8-2.700 2-4 4.500-4H25c4 0 4.500 3 3.500 6l-2 7z" fill="url(#pb)"/><rect x="7" y="19.500" width="22.500" height="9.500" rx="2" fill="#ffc400"/><text x="18.300" y="27" text-anchor="middle" font-family="Open Sans" font-size="7.500" font-weight="800" textLength="17">PRE</text></svg>
  </div>
</footer>
</body>
</html>
